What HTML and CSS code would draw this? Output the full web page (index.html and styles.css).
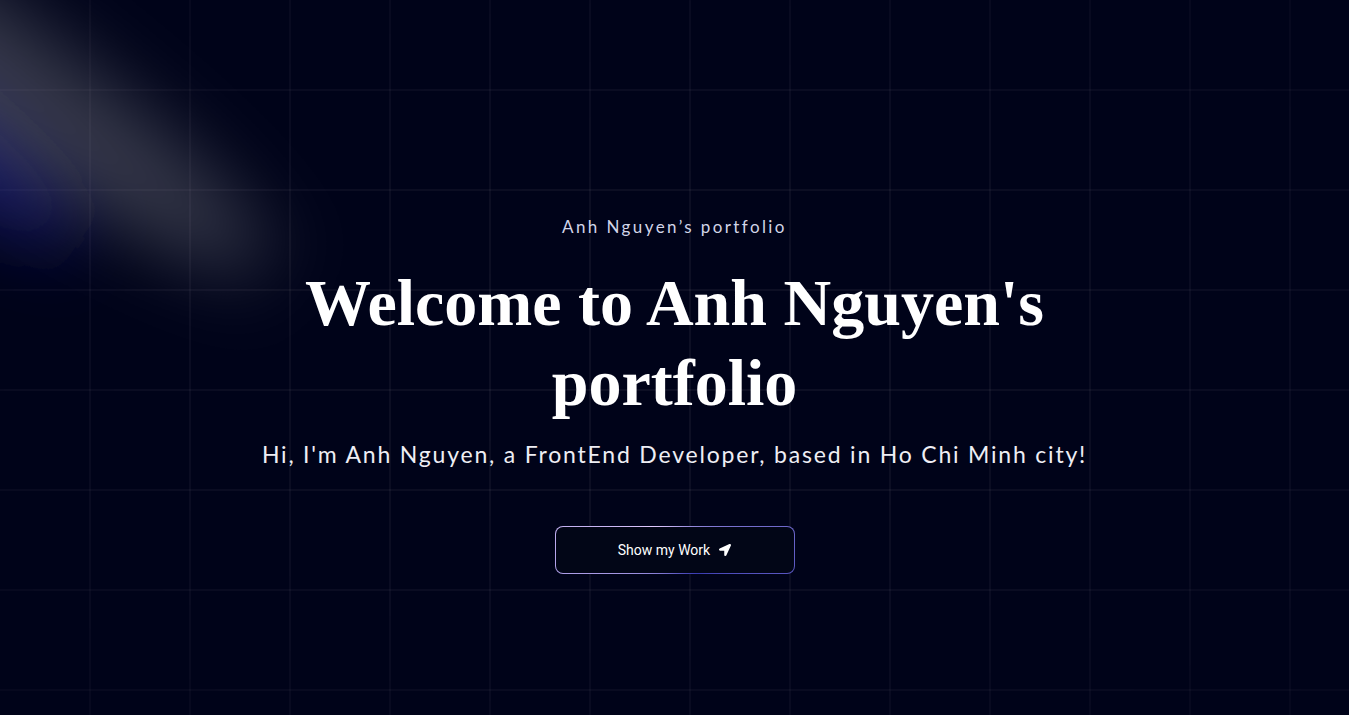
FILE: index.html
```html
<!DOCTYPE html>
<html lang="en">
<head>
<meta charset="utf-8">
<title>Anh Nguyen's portfolio</title>
<link rel="stylesheet" href="styles.css">
</head>
<body>
<main class="hero">
  <svg class="spotlights" viewBox="0 0 1349 715" preserveAspectRatio="xMinYMin slice" aria-hidden="true">
    <defs>
      <filter id="blurWhite" filterUnits="userSpaceOnUse" x="-1200" y="-1200" width="3000" height="3000">
        <feGaussianBlur stdDeviation="38"/>
      </filter>
      <filter id="blurBlue" filterUnits="userSpaceOnUse" x="-1200" y="-1200" width="3000" height="3000">
        <feGaussianBlur stdDeviation="34"/>
      </filter>
    </defs>
    <ellipse cx="-250" cy="14" rx="400" ry="60" transform="rotate(34.7 -250 14)" fill="#3236d8" fill-opacity="0.34" filter="url(#blurBlue)"/>
    <ellipse cx="-128" cy="-8" rx="484" ry="69" transform="rotate(34.7 -128 -8)" fill="#ffffff" fill-opacity="0.21" filter="url(#blurWhite)"/>
  </svg>

  <div class="hero-content">
    <p class="eyebrow">Anh Nguyen’s portfolio</p>
    <h1 class="title">Welcome to Anh Nguyen's portfolio</h1>
    <p class="intro">Hi, I'm Anh Nguyen, a FrontEnd Developer, based in Ho Chi Minh city!</p>
    <a class="magic-btn" href="#projects">
      <span class="magic-inner">
        Show my Work
        <svg class="magic-icon" viewBox="0 0 512 512" aria-hidden="true"><path d="M444.52 3.52L28.74 195.42c-47.970 22.39-31.98 92.75 19.19 92.75h175.91v175.91c0 51.17 70.36 67.17 92.75 19.19l191.9-415.78c15.990-38.39-25.59-79.97-63.97-63.970z"/></svg>
      </span>
    </a>
  </div>
</main>
</body>
</html>
```

FILE: styles.css
```css
* {
  box-sizing: border-box;
}

html, body {
  margin: 0;
  padding: 0;
  background: #000319;
}

.hero {
  position: relative;
  min-height: 100vh;
  overflow: hidden;
  background: #000319;
  font-family: "Lato", "Noto Sans", sans-serif;
}

.hero::before {
  content: "";
  position: absolute;
  inset: 0;
  background-image:
    linear-gradient(to right, rgba(255, 255, 255, 0.05) 0 2px, transparent 2px),
    linear-gradient(to bottom, rgba(255, 255, 255, 0.05) 0 2px, transparent 2px);
  background-size: 100px 100px;
  background-position: 89px 89px;
  -webkit-mask-image: radial-gradient(ellipse at center, #000 20%, rgba(0, 0, 0, 0.45) 100%);
  mask-image: radial-gradient(ellipse at center, #000 20%, rgba(0, 0, 0, 0.45) 100%);
  z-index: 0;
}

.spotlights {
  position: absolute;
  top: 0;
  left: 0;
  width: 100%;
  height: 100%;
  pointer-events: none;
  z-index: 1;
}

.hero-content {
  position: relative;
  z-index: 2;
  display: flex;
  flex-direction: column;
  align-items: center;
  padding-top: 215px;
}

.eyebrow {
  margin: 0;
  font-size: 17px;
  line-height: 24px;
  letter-spacing: 2.4px;
  color: #d2d5e8;
  text-align: center;
}

.title {
  margin: 24px 0 0;
  max-width: 809px;
  font-family: "Liberation Serif", "Times New Roman", serif;
  font-weight: 700;
  font-size: 66px;
  line-height: 80px;
  color: #ffffff;
  text-align: center;
}

.intro {
  margin: 15px 0 0;
  font-size: 23px;
  line-height: 32px;
  letter-spacing: 1.8px;
  color: #eeeef4;
  text-align: center;
}

.magic-btn {
  margin-top: 56px;
  display: flex;
  width: 240px;
  height: 48px;
  padding: 1px;
  border-radius: 8px;
  background: conic-gradient(from 315deg at 50% 50%, #E2CBFF 0%, #393BB2 50%, #E2CBFF 100%);
  text-decoration: none;
}

.magic-inner {
  flex: 1;
  display: flex;
  align-items: center;
  justify-content: center;
  gap: 9px;
  border-radius: 7px;
  background: #020617;
  color: #ffffff;
  font-family: "Roboto", "Inter", sans-serif;
  font-weight: 400;
  font-size: 14px;
}

.magic-icon {
  width: 12px;
  height: 12px;
  fill: #ffffff;
}
```
